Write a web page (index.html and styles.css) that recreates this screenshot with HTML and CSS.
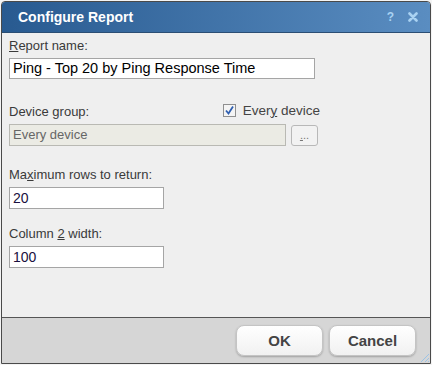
FILE: index.html
```html
<!DOCTYPE html>
<html lang="en">
<head>
    <meta charset="UTF-8">
    <title>Configure Report</title>
    <link rel="stylesheet" href="styles.css">
</head>
<body>
    <div class="dialog">
        <div class="title-bar">
            <span class="title">Configure Report</span>
            <span class="title-icons">
                <span class="help">?</span>
                <svg class="close" width="10" height="10" viewBox="0 0 10 10">
                    <path d="M1.5 1.5 L8.5 8.5 M8.5 1.5 L1.5 8.5" stroke="#a9d2f2" stroke-width="2.6" stroke-linecap="round"/>
                </svg>
            </span>
        </div>

        <div class="content">
            <label class="field-label"><u>R</u>eport name:</label>
            <div class="input wide">Ping - Top 20 by Ping Response Time</div>

            <div class="group-row">
                <label class="field-label">Device group:</label>
                <label class="check-label">
                    <svg class="checkbox" width="13" height="13" viewBox="0 0 13 13">
                        <rect x="0.5" y="0.5" width="12" height="12" fill="#f4f4f4" stroke="#8f8f8f"/>
                        <path d="M3 6.5 L5.5 9.5 L10 2.5" fill="none" stroke="#2f5fb0" stroke-width="1.8"/>
                    </svg>
                    <span>Ever<u>y</u> device</span>
                </label>
            </div>
            <div class="device-row">
                <div class="input disabled">Every device</div>
                <button class="browse"><u>.</u>..</button>
            </div>

            <label class="field-label spaced first">Ma<u>x</u>imum rows to return:</label>
            <div class="input short">20</div>

            <label class="field-label spaced">Column <u>2</u> width:</label>
            <div class="input short">100</div>
        </div>

        <div class="footer">
            <button class="btn">OK</button>
            <button class="btn">Cancel</button>
            <svg class="grip" width="12" height="12" viewBox="0 0 12 12">
                <path d="M11 3 L3 11 M11 7 L7 11 M11 10 L10 11" stroke="#9cc3e6" stroke-width="1"/>
            </svg>
        </div>
    </div>
</body>
</html>
```

FILE: styles.css
```css
body {
    margin: 0;
    padding: 1px;
    background: #f4f4f4;
    font-family: "Liberation Sans", Arial, sans-serif;
}

.dialog {
    width: 430px;
    height: 363px;
    box-sizing: border-box;
    border: 1px solid #4a4a4a;
    border-radius: 4px 4px 0 0;
    display: flex;
    flex-direction: column;
    overflow: hidden;
}

.title-bar {
    height: 30px;
    display: flex;
    align-items: center;
    justify-content: space-between;
    padding: 0 12px 0 16px;
    background: linear-gradient(to right, #285a90, #5a8dc1);
    border-bottom: 1px solid #2b4e74;
}

.title {
    color: #fff;
    font-weight: bold;
    font-size: 14px;
}

.title-icons {
    display: flex;
    align-items: center;
    gap: 14px;
}

.help {
    color: #a9d2f2;
    font-weight: bold;
    font-size: 12px;
}

.content {
    flex: 1;
    background: #efefef;
    border-bottom: 1px solid #555;
    padding: 5px 0 0 7px;
    color: #333;
    font-size: 13px;
}

.field-label {
    display: block;
    line-height: 16px;
    margin-bottom: 4px;
    color: #3a3a3a;
}

.spaced {
    margin-top: 17px;
}

.spaced.first {
    margin-top: 21px;
}

.input {
    box-sizing: border-box;
    height: 21px;
    line-height: 19px;
    padding: 0 3px;
    background: #fff;
    border: 1px solid #a5a5a5;
    color: #000;
    font-size: 14.5px;
}

.wide {
    width: 306px;
}

.short {
    width: 155px;
    height: 22px;
    line-height: 20px;
    font-size: 14px;
    color: #1a1040;
}

.group-row {
    display: flex;
    justify-content: space-between;
    align-items: center;
    width: 311px;
    margin-top: 21px;
}

.group-row .field-label {
    margin: 4px 0 0;
}

.check-label {
    display: flex;
    align-items: center;
    gap: 7px;
    color: #444;
    font-size: 13.5px;
}

.device-row {
    display: flex;
    align-items: center;
    gap: 5px;
    margin-top: 4px;
}

.disabled {
    width: 277px;
    height: 22px;
    line-height: 20px;
    background: #ebebe4;
    border-color: #b9b9b3;
    color: #666;
    font-size: 13px;
}

.browse {
    width: 27px;
    height: 21px;
    padding: 0;
    background: #f2f2f2;
    border: 1px solid #b8b8b8;
    border-radius: 3px;
    color: #777;
    font-size: 11px;
    line-height: 12px;
}

.footer {
    position: relative;
    height: 45px;
    background: #d6d6d6;
    display: flex;
    justify-content: flex-end;
    align-items: center;
    gap: 6px;
    padding-right: 14px;
}

.btn {
    width: 87px;
    height: 31px;
    border: 1px solid #c4c4c4;
    border-radius: 8px;
    background: linear-gradient(#ffffff, #f1f1f1);
    box-shadow: 0 1px 2px rgba(0, 0, 0, 0.25);
    color: #444;
    font-family: "Liberation Sans", Arial, sans-serif;
    font-weight: bold;
    font-size: 15px;
}

.grip {
    position: absolute;
    right: 0;
    bottom: 0;
}
```
